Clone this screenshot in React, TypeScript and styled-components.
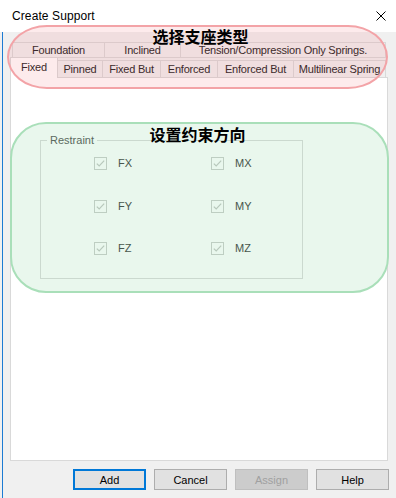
import React from "react";
import styled, { createGlobalStyle } from "styled-components";

const UI_FONT = `"Liberation Sans", Arial, sans-serif`;
const CJK_FONT = `"Noto Sans CJK SC", "Noto Sans", sans-serif`;

const Global = createGlobalStyle`
  html, body { margin: 0; padding: 0; }
  body { width: 396px; height: 498px; overflow: hidden; background: #f0f0f0; }
  * { box-sizing: border-box; }
`;

const Window = styled.div`
  position: relative;
  width: 396px;
  height: 498px;
  display: flex;
  flex-direction: column;
  background: #f0f0f0;
  font-family: ${UI_FONT};
  font-size: 11px;
  color: #1a1a1a;
`;

const TitleBar = styled.div`
  height: 32px;
  flex: none;
  display: flex;
  align-items: center;
  justify-content: space-between;
  padding: 0 10px 0 12px;
  background: #ffffff;
`;

const Title = styled.span`
  font-size: 12px;
  letter-spacing: 0.1px;
  color: #000;
`;

const CloseBox = styled.div`
  width: 10px;
  height: 10px;
  display: flex;
`;

const Client = styled.div`
  flex: 1;
  display: flex;
  flex-direction: column;
  margin-left: 2px;
  border-left: 1px solid #1c7bd3;
  padding: 10px 8px 8px 7px;
`;

const TabControl = styled.div`
  flex: 1;
  display: flex;
  flex-direction: column;
`;

const BackRow = styled.div`
  height: 18px;
  display: flex;
  align-items: flex-start;
  padding-left: 2px;
`;

const FrontRow = styled.div`
  height: 17px;
  display: flex;
  align-items: flex-end;
  padding-left: 2px;
`;

const BackTab = styled.div<{ $w: number }>`
  width: ${(p) => p.$w}px;
  height: 16px;
  display: flex;
  align-items: center;
  justify-content: center;
  padding-top: 1px;
  border: 1px solid #d9d9d9;
  background: #f0f0f0;
  color: #222;
  line-height: 11px;
  letter-spacing: -0.2px;
  white-space: nowrap;
  & + & { margin-left: -1px; }
`;

const FrontTab = styled.div<{ $w: number; $active?: boolean }>`
  position: relative;
  z-index: ${(p) => (p.$active ? 2 : 1)};
  width: ${(p) => p.$w}px;
  height: ${(p) => (p.$active ? 21 : 17)}px;
  display: flex;
  align-items: center;
  justify-content: center;
  padding-bottom: ${(p) => (p.$active ? 2 : 0)}px;
  margin: ${(p) => (p.$active ? "0 0 -1px -2px" : "0")};
  border: 1px solid #d9d9d9;
  border-bottom: none;
  background: ${(p) => (p.$active ? "#ffffff" : "#f0f0f0")};
  color: #222;
  letter-spacing: -0.2px;
  white-space: nowrap;
  & + & { margin-left: -1px; }
`;

const TabPanel = styled.div`
  position: relative;
  z-index: 1;
  flex: 1;
  background: #ffffff;
  border: 1px solid #d9d9d9;
  padding: 56px 0 0 29px;
`;

const GroupBox = styled.fieldset`
  width: 263px;
  height: 145px;
  margin: 0;
  padding: 11px 0 0 0;
  min-width: 0;
  border: 1px solid #dcdcdc;
`;

const Legend = styled.legend`
  margin-left: 6px;
  padding: 0 3px;
  font-size: 11px;
  line-height: 12px;
  color: #5a5a5a;
`;

const CheckGrid = styled.div`
  display: grid;
  grid-template-columns: 117px 117px;
  grid-auto-rows: 13px;
  row-gap: 29.5px;
  margin-left: 53px;
`;

const CheckItem = styled.div`
  display: flex;
  align-items: center;
  gap: 11px;
`;

const Box = styled.span`
  width: 13px;
  height: 13px;
  flex: none;
  display: flex;
  border: 1px solid #cdd0cd;
  background: transparent;
`;

const CheckLabel = styled.span`
  font-size: 11px;
  line-height: 13px;
  color: #444;
`;

const ButtonRow = styled.div`
  flex: none;
  display: flex;
  justify-content: flex-end;
  gap: 8px;
  margin: 8px -1px 0 0;
`;

const Button = styled.button<{ $focus?: boolean }>`
  width: 73px;
  height: 21px;
  padding: 0;
  font-family: ${UI_FONT};
  font-size: 11px;
  color: ${(p) => (p.disabled ? "#a0a0a0" : "#000")};
  background: ${(p) => (p.disabled ? "#cccccc" : "#e1e1e1")};
  border: ${(p) =>
    p.$focus ? "2px solid #0078d7" : p.disabled ? "1px solid #bfbfbf" : "1px solid #adadad"};
  border-radius: 0;
  outline: none;
`;

const PinkNote = styled.div`
  position: absolute;
  left: 7px;
  top: 25px;
  width: 381px;
  height: 64px;
  border: 2px solid #f3a3a7;
  border-radius: 40px / 32px;
  background: rgba(240, 100, 110, 0.13);
  display: flex;
  justify-content: center;
  align-items: flex-start;
  padding: 1px 0 0 6px;
  pointer-events: none;
  z-index: 5;
`;

const GreenNote = styled.div`
  position: absolute;
  left: 10px;
  top: 122px;
  width: 379px;
  height: 171px;
  border: 2px solid #a9dfb9;
  border-radius: 36px;
  background: rgba(100, 200, 130, 0.14);
  display: flex;
  justify-content: center;
  align-items: flex-start;
  padding: 2px 4px 0 0;
  pointer-events: none;
  z-index: 5;
`;

const NoteLabel = styled.span`
  font-family: ${CJK_FONT};
  font-size: 16px;
  font-weight: 700;
  line-height: 14px;
  height: 14px;
  padding-top: 1px;
  color: #000;
`;

const CheckMark = () => (
  <svg width="11" height="11" viewBox="0 0 11 11">
    <polyline points="1.8,5.6 4.2,8 9.2,2.6" fill="none" stroke="#c6c9c6" strokeWidth="1.2" />
  </svg>
);

const Check = ({ label }: { label: string }) => (
  <CheckItem>
    <Box>
      <CheckMark />
    </Box>
    <CheckLabel>{label}</CheckLabel>
  </CheckItem>
);

const backTabs = [
  { label: "Foundation", w: 93 },
  { label: "Inclined", w: 77 },
  { label: "Tension/Compression Only Springs.", w: 206 },
];

const frontTabs = [
  { label: "Fixed", w: 48, active: true },
  { label: "Pinned", w: 46 },
  { label: "Fixed But", w: 59 },
  { label: "Enforced", w: 58 },
  { label: "Enforced But", w: 77 },
  { label: "Multilinear Spring", w: 93 },
];

export default function App() {
  return (
    <Window>
      <Global />
      <TitleBar>
        <Title>Create Support</Title>
        <CloseBox>
          <svg width="10" height="10" viewBox="0 0 10 10">
            <path d="M0.5 0.5 L9.5 9.5 M9.5 0.5 L0.5 9.5" stroke="#000" strokeWidth="1" />
          </svg>
        </CloseBox>
      </TitleBar>
      <Client>
        <TabControl>
          <BackRow>
            {backTabs.map((t) => (
              <BackTab key={t.label} $w={t.w}>
                {t.label}
              </BackTab>
            ))}
          </BackRow>
          <FrontRow>
            {frontTabs.map((t) => (
              <FrontTab key={t.label} $w={t.w} $active={t.active}>
                {t.label}
              </FrontTab>
            ))}
          </FrontRow>
          <TabPanel>
            <GroupBox>
              <Legend>Restraint</Legend>
              <CheckGrid>
                <Check label="FX" />
                <Check label="MX" />
                <Check label="FY" />
                <Check label="MY" />
                <Check label="FZ" />
                <Check label="MZ" />
              </CheckGrid>
            </GroupBox>
          </TabPanel>
        </TabControl>
        <ButtonRow>
          <Button $focus>Add</Button>
          <Button>Cancel</Button>
          <Button disabled>Assign</Button>
          <Button>Help</Button>
        </ButtonRow>
      </Client>
      <PinkNote>
        <NoteLabel>选择支座类型</NoteLabel>
      </PinkNote>
      <GreenNote>
        <NoteLabel>设置约束方向</NoteLabel>
      </GreenNote>
    </Window>
  );
}
